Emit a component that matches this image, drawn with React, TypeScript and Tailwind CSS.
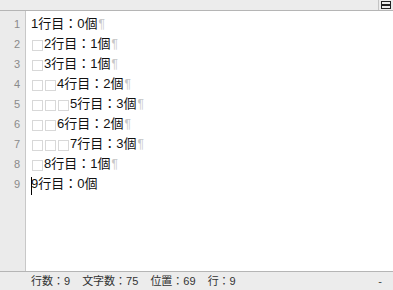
import React from "react";

const lines = [
  { indent: 0, text: "1行目：0個" },
  { indent: 1, text: "2行目：1個" },
  { indent: 1, text: "3行目：1個" },
  { indent: 2, text: "4行目：2個" },
  { indent: 3, text: "5行目：3個" },
  { indent: 2, text: "6行目：2個" },
  { indent: 3, text: "7行目：3個" },
  { indent: 1, text: "8行目：1個" },
  { indent: 0, text: "9行目：0個", last: true },
];

const font = { fontFamily: '"Liberation Sans", "Noto Sans CJK JP", sans-serif' };

// full-width space marker
function Space() {
  return (
    <span className="inline-flex w-[13px] h-[20px] items-center justify-center align-top">
      <span className="w-[11px] h-[11px] border border-[#d8d8d8] mt-[2px]" />
    </span>
  );
}

export default function App() {
  return (
    <div className="w-[393px] h-[290px] bg-white flex flex-col overflow-hidden" style={font}>
      {/* top bar */}
      <div className="h-[11px] bg-[#ececec] border-b border-[#b5b5b5] flex justify-end">
        <div className="w-[15px] h-full border-l border-[#c4c4c4] flex items-center justify-center">
          <div className="w-[10px] h-[8px] border-[1.5px] border-[#222] flex flex-col justify-center">
            <div className="h-[1.5px] bg-[#222]" />
          </div>
        </div>
      </div>

      {/* editor */}
      <div className="flex-1 flex min-h-0">
        <div className="w-[26px] bg-[#ebebeb] border-r border-[#c8c8c8] pt-[3px] pr-[5px] flex flex-col items-end">
          {lines.map((_, i) => (
            <div key={i} className="h-[20px] leading-[20px] text-[11px] text-[#8a8a8a]">
              {i + 1}
            </div>
          ))}
        </div>
        <div className="flex-1 pt-[3px] pl-[5px]">
          {lines.map((l, i) => (
            <div key={i} className="h-[20px] leading-[20px] text-[13px] text-[#111] whitespace-nowrap relative">
              {Array.from({ length: l.indent }).map((_, j) => (
                <Space key={j} />
              ))}
              {l.last && <span className="absolute left-0 top-[3px] w-[1px] h-[18px] bg-black" />}
              <span>{l.text}</span>
              {!l.last && <span className="text-[#c8c8c8] text-[12px] ml-[1px]">¶</span>}
            </div>
          ))}
        </div>
      </div>

      {/* status bar */}
      <div className="h-[19px] bg-[#ececec] border-t border-[#b5b5b5] flex items-center pl-[31px] pr-[11px] text-[11px] text-[#333]">
        <span>行数：9</span>
        <span className="ml-[12px]">文字数：75</span>
        <span className="ml-[12px]">位置：69</span>
        <span className="ml-[12px]">行：9</span>
        <span className="ml-auto text-[#444]">-</span>
      </div>
    </div>
  );
}
